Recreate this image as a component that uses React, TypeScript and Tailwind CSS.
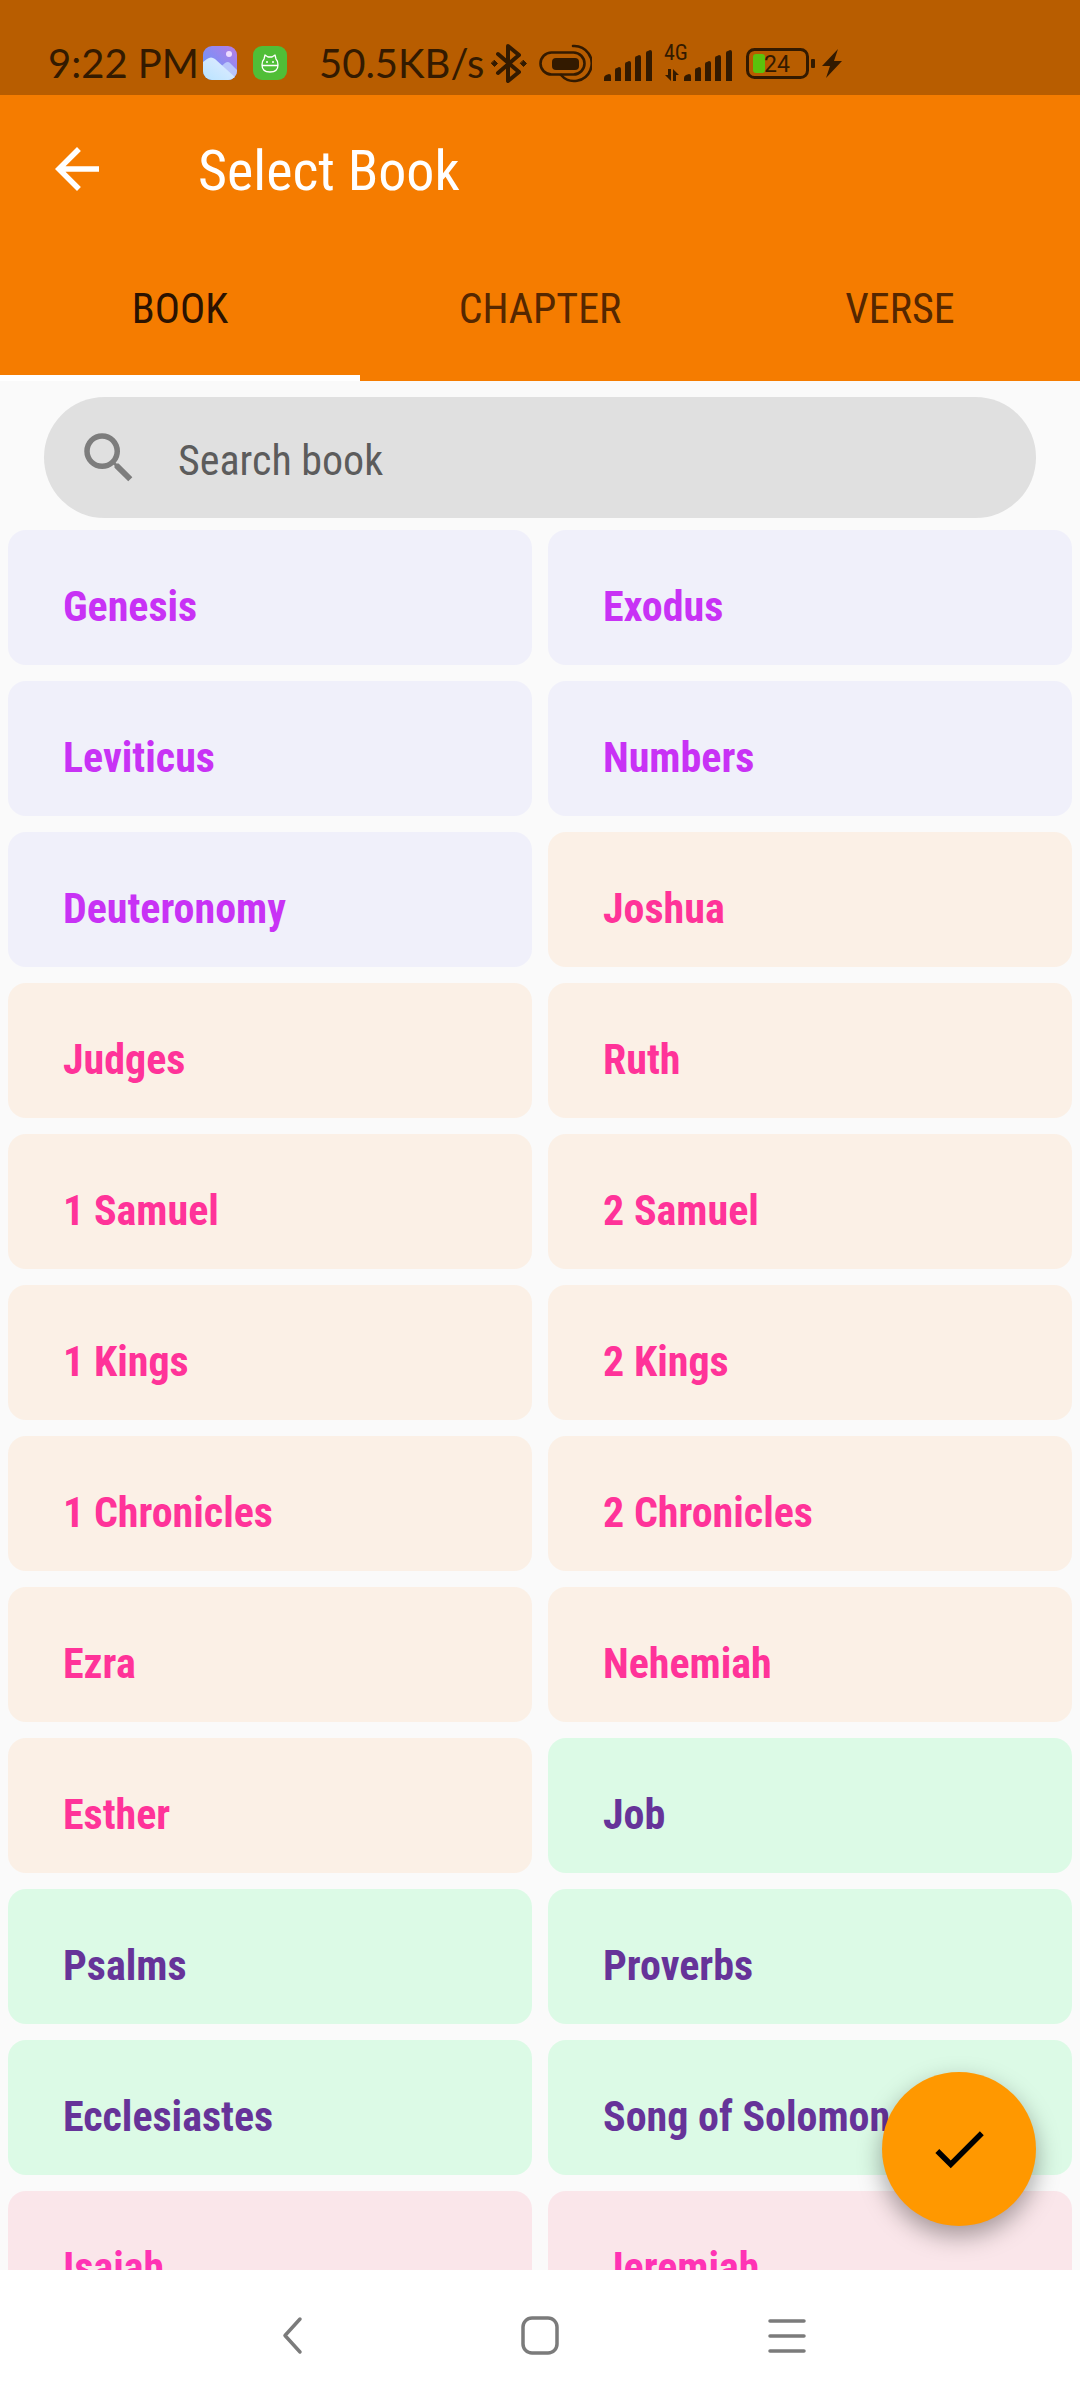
import { useState } from 'react'

type Group = 'law' | 'history' | 'poetry' | 'prophets'

const GROUP_STYLE: Record<Group, string> = {
  law: 'bg-[#f0f0fa] text-[#c832f5]',
  history: 'bg-[#fbf0e6] text-[#ff3399]',
  poetry: 'bg-[#dcfae6] text-[#663399]',
  prophets: 'bg-[#fae6ea] text-[#ff33b4]',
}

const BOOKS: { name: string; group: Group }[] = [
  { name: 'Genesis', group: 'law' },
  { name: 'Exodus', group: 'law' },
  { name: 'Leviticus', group: 'law' },
  { name: 'Numbers', group: 'law' },
  { name: 'Deuteronomy', group: 'law' },
  { name: 'Joshua', group: 'history' },
  { name: 'Judges', group: 'history' },
  { name: 'Ruth', group: 'history' },
  { name: '1 Samuel', group: 'history' },
  { name: '2 Samuel', group: 'history' },
  { name: '1 Kings', group: 'history' },
  { name: '2 Kings', group: 'history' },
  { name: '1 Chronicles', group: 'history' },
  { name: '2 Chronicles', group: 'history' },
  { name: 'Ezra', group: 'history' },
  { name: 'Nehemiah', group: 'history' },
  { name: 'Esther', group: 'history' },
  { name: 'Job', group: 'poetry' },
  { name: 'Psalms', group: 'poetry' },
  { name: 'Proverbs', group: 'poetry' },
  { name: 'Ecclesiastes', group: 'poetry' },
  { name: 'Song of Solomon', group: 'poetry' },
  { name: 'Isaiah', group: 'prophets' },
  { name: 'Jeremiah', group: 'prophets' },
]

const TABS = ['BOOK', 'CHAPTER', 'VERSE']

function SignalBars() {
  return (
    <svg width="48" height="36" viewBox="0 -5 48 36" fill="currentColor" aria-hidden="true">
      <path d="M0 31v-3q0-2 2-3l3-1q2 0 2 2v5zM11 31V20q0-2 2-2l2-1q2 0 2 2v12zM21 31V14q0-2 2-2l2-1q2 0 2 2v18zM31 31V8q0-2 2-2l2-1q2 0 2 2v24zM42 31V3q0-2 2-2l2-1q2 0 2 2v29z" />
    </svg>
  )
}

function StatusBar() {
  return (
    <div className="flex h-[95px] shrink-0 items-end bg-[#b85d00] pb-3 pl-12 text-[#331a00]"
      style={{ fontFamily: "Lato, 'Noto Sans', sans-serif" }}>
      <div className="flex h-10 items-center">
        <span className="w-[155px] text-[40px] leading-10 whitespace-nowrap">9:22 PM</span>
        {/* Gallery app */}
        <svg className="mr-4" width="34" height="34" viewBox="0 0 34 34" aria-hidden="true">
          <defs>
            <linearGradient id="sky" x1="0" y1="1" x2="1" y2="0">
              <stop offset="0" stopColor="#5a9bff" />
              <stop offset="1" stopColor="#b77de6" />
            </linearGradient>
            <linearGradient id="hill" x1="0" y1="1" x2="1" y2="0">
              <stop offset="0" stopColor="#b9e4ff" />
              <stop offset="1" stopColor="#e6ecff" />
            </linearGradient>
            <clipPath id="gallery">
              <rect width="34" height="34" rx="9" />
            </clipPath>
          </defs>
          <g clipPath="url(#gallery)">
            <rect width="34" height="34" fill="url(#sky)" />
            <path d="M14 24l8-7q3-2 5 0l7 7v10H14z" fill="#b9c6fb" />
            <path d="M0 16l4-3q4-3 8 0l22 20v1H0z" fill="url(#hill)" />
            <circle cx="26" cy="8" r="3" fill="#eddcff" />
          </g>
        </svg>
        {/* Green helper app */}
        <svg className="mr-8" width="34" height="34" viewBox="0 0 34 34" fill="none" aria-hidden="true">
          <rect width="34" height="34" rx="9" fill="#50be37" />
          <path d="M9 19.500h16M9 19q0-4 2-6l1-4 3 2h4l3-2 1 4q2 2 2 6 0 7-8 7t-8-7z" stroke="#fff" strokeWidth="1.300" strokeLinejoin="round" />
          <circle cx="14" cy="16" r="1" fill="#fff" />
          <circle cx="20" cy="16" r="1" fill="#fff" />
        </svg>
        <span className="w-[172px] text-[40px] leading-10 whitespace-nowrap">50.5KB/s</span>
        {/* Bluetooth */}
        <svg className="mr-3" width="36" height="39" viewBox="0 0 36 39" fill="none" stroke="currentColor" strokeWidth="4" strokeLinecap="round" strokeLinejoin="round" aria-hidden="true">
          <path d="M7 10l21 18-11 9V2l11 9L7 29" />
          <path d="M3.500 16.500l3 3-3 3-3-3zM32.500 16.500l3 3-3 3-3-3z" fill="currentColor" strokeWidth="1" />
        </svg>
        <svg className="mr-3" width="53" height="39" viewBox="0 0 53 39" fill="none" stroke="currentColor" strokeWidth="2.600" strokeLinecap="round" aria-hidden="true">
          <rect x="1.500" y="8.500" width="44" height="22" rx="11" />
          <rect x="13" y="14" width="27" height="12" rx="4" fill="currentColor" stroke="none" />
          <path d="M34 2a17.500 17.500 0 1 1-12 29" />
        </svg>
        <SignalBars />
        {/* Mobile data */}
        <div className="ml-3 flex h-9 items-end">
          <div className="flex h-9 w-5 flex-col justify-between">
            <span className="text-[22px] leading-4" style={{ fontFamily: "'Roboto Condensed', sans-serif" }}>4G</span>
            <svg width="16" height="12" viewBox="0 0 16 12" fill="currentColor" aria-hidden="true">
              <path d="M4 0h3v12L1 6h3zM9 12V0l6 6h-3v6z" />
            </svg>
          </div>
          <SignalBars />
        </div>
        {/* Battery */}
        <svg className="ml-3.5" width="70" height="31" viewBox="0 0 70 31" aria-hidden="true">
          <rect x="1.500" y="1.500" width="60" height="28" rx="7" fill="none" stroke="currentColor" strokeWidth="3" />
          <rect x="7" y="6" width="12" height="19" rx="3" fill="#5bc30c" />
          <rect x="65" y="11" width="4" height="9" rx="1" fill="currentColor" />
          <text x="31" y="24" textAnchor="middle" fontSize="23" fill="currentColor" fontFamily="Roboto, sans-serif">24</text>
        </svg>
        <svg className="ml-1.5" width="20" height="29" viewBox="0 0 20 29" fill="currentColor" aria-hidden="true">
          <path d="M16 0L0 17h8L4 29l16-17h-8z" />
        </svg>
      </div>
    </div>
  )
}

export default function App() {
  const [tab, setTab] = useState('BOOK')
  const [query, setQuery] = useState('')

  const books = BOOKS.filter((b) => b.name.toLowerCase().includes(query.toLowerCase()))

  return (
    <div className="flex h-screen flex-col bg-[#fafafa]"
      style={{ fontFamily: "'Roboto Condensed', Roboto, sans-serif" }}>
      <StatusBar />

      <header className="shrink-0 bg-[#f57c00]">
        <div className="flex h-[152px] items-center pl-11">
          <button type="button" aria-label="Back" className="mr-[88px] pb-1 text-white">
            <svg width="66" height="66" viewBox="0 0 24 24" fill="currentColor" aria-hidden="true">
              <path d="M20 11H7.830l5.590-5.590L12 4l-8 8 8 8 1.410-1.410L7.830 13H20v-2z" />
            </svg>
          </button>
          <h1 className="text-[56px] leading-[64px] text-white">Select Book</h1>
        </div>
        <div role="tablist" className="grid grid-cols-3">
          {TABS.map((name) => (
            <button
              key={name}
              type="button"
              role="tab"
              aria-selected={tab === name}
              onClick={() => setTab(name)}
              className={`h-[134px] border-b-6 pb-1 text-[42px] leading-[48px] ${
                tab === name ? 'border-white text-[#2b1200]' : 'border-transparent text-[#552700]'
              }`}
            >
              {name}
            </button>
          ))}
        </div>
      </header>

      <main className="relative flex min-h-0 flex-1 flex-col">
        <div className="shrink-0 px-11 pt-4 pb-3">
          <label className="flex h-[121px] items-center rounded-full bg-[#e0e0e0] pl-8">
            <svg className="mr-9" width="66" height="66" viewBox="0 0 24 24" fill="#7d7d7d" aria-hidden="true">
              <path d="M15.500 14h-.79l-.28-.27A6.471 6.471 0 0 0 16 9.500 6.500 6.500 0 1 0 9.500 16c1.610 0 3.090-.59 4.230-1.570l.27.28v.79l5 4.990L20.490 19l-4.990-5zm-6 0C7.010 14 5 11.990 5 9.500S7.010 5 9.500 5 14 7.010 14 9.500 11.990 14 9.500 14z" />
            </svg>
            <input
              type="text"
              aria-label="Search book"
              value={query}
              onChange={(e) => setQuery(e.target.value)}
              placeholder="Search book"
              className="min-w-0 flex-1 bg-transparent pt-1.5 text-[42px] leading-[48px] text-[#222] outline-none placeholder:text-[#5c5c5c]"
            />
          </label>
        </div>

        <div className="grid min-h-0 flex-1 auto-rows-[135px] grid-cols-2 gap-4 overflow-hidden px-2">
          {books.map((book) => (
            <button
              key={book.name}
              type="button"
              className={`rounded-[18px] pt-[18px] pl-[55px] text-left text-[42px] leading-[48px] font-bold ${GROUP_STYLE[book.group]}`}
            >
              {book.name}
            </button>
          ))}
        </div>

        <button
          type="button"
          aria-label="Confirm"
          className="absolute right-11 bottom-11 flex size-[154px] items-center justify-center rounded-full bg-[#ff9800] text-black shadow-[0_10px_24px_rgba(0,0,0,0.35)]"
        >
          <svg width="66" height="66" viewBox="0 0 24 24" fill="currentColor" aria-hidden="true">
            <path d="M9 16.170L4.830 12l-1.420 1.410L9 19 21 7l-1.410-1.410z" />
          </svg>
        </button>
      </main>

      <nav className="flex h-[130px] shrink-0 items-center justify-center gap-[207px] bg-white text-[#7b7b7b]">
        <button type="button" aria-label="Back">
          <svg width="40" height="40" viewBox="0 0 40 40" fill="none" stroke="currentColor" strokeWidth="3.500" strokeLinecap="round" strokeLinejoin="round" aria-hidden="true">
            <path d="M27 4L12 20.500 27 37" />
          </svg>
        </button>
        <button type="button" aria-label="Home">
          <svg width="40" height="40" viewBox="0 0 40 40" fill="none" stroke="currentColor" strokeWidth="3.500" aria-hidden="true">
            <rect x="3" y="3" width="34" height="35" rx="9" />
          </svg>
        </button>
        <button type="button" aria-label="Recent apps">
          <svg width="40" height="40" viewBox="0 0 40 40" stroke="currentColor" strokeWidth="3.500" strokeLinecap="round" aria-hidden="true">
            <path d="M3 6h34M3 21h34M3 36h34" />
          </svg>
        </button>
      </nav>
    </div>
  )
}
